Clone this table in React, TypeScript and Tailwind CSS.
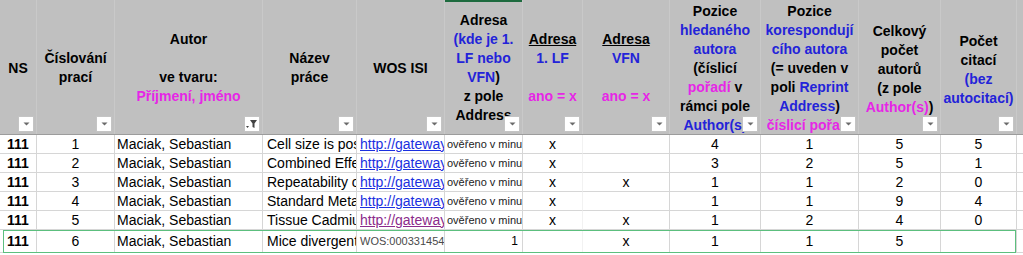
import React from "react";

const COLS =
  "grid grid-cols-[37px_78px_148px_94px_88px_78px_60px_87px_91px_98px_82px_76px_1fr]";

const B = "text-[#2323d9]";
const M = "text-[#e626e6]";

function FilterBtn({ active }: { active?: boolean }) {
  return (
    <div className="absolute right-[2px] bottom-[2px] w-[16px] h-[16px] bg-white border border-[#c4c4c4] flex items-center justify-center">
      {active ? (
        <svg width="12" height="10" viewBox="0 0 12 10">
          <polygon points="4,1 11,1 8.5,4.5 8.5,9 6.5,8 6.5,4.5" fill="#444" />
          <polygon points="0,7 3,7 1.5,9" fill="#444" />
        </svg>
      ) : (
        <svg width="7" height="4" viewBox="0 0 7 4">
          <polygon points="0.5,0.5 6.5,0.5 3.5,3.5" fill="#6b6b6b" />
        </svg>
      )}
    </div>
  );
}

function H({
  children,
  active,
  top,
  last,
}: {
  children?: React.ReactNode;
  active?: boolean;
  top?: boolean;
  last?: boolean;
}) {
  return (
    <div
      className={
        "relative h-[134px] flex items-center justify-center text-center overflow-hidden " +
        (last ? "" : "border-r border-[#c9c9c9]")
      }
    >
      {top && <div className="absolute top-0 left-0 right-0 h-[2px] bg-[#1e6b3f]" />}
      <div className="whitespace-nowrap pt-[2px]">{children}</div>
      {!last && <FilterBtn active={active} />}
    </div>
  );
}

function L({ children }: { children?: React.ReactNode }) {
  return <div className="h-[19px]">{children ?? "\u00a0"}</div>;
}

type Row = {
  t: string;
  link: string;
  linkVisited?: boolean;
  wos?: boolean;
  adr: string;
  lf: string;
  vfn: string;
  a: string;
  b: string;
  c: string;
  d: string;
  n: string;
};

const rows: Row[] = [
  { n: "1", t: "Cell size is posit", link: "http://gateway.is", adr: "ověřeno v minu", lf: "x", vfn: "", a: "4", b: "1", c: "5", d: "5" },
  { n: "2", t: "Combined Effect", link: "http://gateway.is", adr: "ověřeno v minu", lf: "x", vfn: "", a: "3", b: "2", c: "5", d: "1" },
  { n: "3", t: "Repeatability of", link: "http://gateway.is", adr: "ověřeno v minu", lf: "x", vfn: "x", a: "1", b: "1", c: "2", d: "0" },
  { n: "4", t: "Standard Metab", link: "http://gateway.is", adr: "ověřeno v minu", lf: "x", vfn: "", a: "1", b: "1", c: "9", d: "4" },
  { n: "5", t: "Tissue Cadmium", link: "http://gateway.is", linkVisited: true, adr: "ověřeno v minu", lf: "x", vfn: "x", a: "1", b: "2", c: "4", d: "0" },
];

const cell = "border-r border-b border-[#d6d6d6] overflow-hidden whitespace-nowrap flex items-center";

function DataRow({ r, h }: { r: Row; h: string }) {
  return (
    <div className={COLS + " " + h + " text-[14px] text-black"}>
      <div className={cell + " justify-center font-bold"}>111</div>
      <div className={cell + " justify-center"}>{r.n}</div>
      <div className={cell + " pl-[2px]"}>Maciak, Sebastian</div>
      <div className={cell + " pl-[4px]"}>{r.t}</div>
      {r.wos ? (
        <div className={cell + " pl-[3px] text-[11px] text-[#4a4a4a]"}>{r.link}</div>
      ) : (
        <div
          className={
            cell +
            " pl-[3px] underline " +
            (r.linkVisited ? "text-[#8b2a8b]" : "text-[#1a2fe0]")
          }
        >
          {r.link}
        </div>
      )}
      {r.wos ? (
        <div className={cell + " justify-end pr-[4px] text-[12px]"}>{r.adr}</div>
      ) : (
        <div className={cell + " pl-[2px] text-[11px] text-[#222]"}>{r.adr}</div>
      )}
      <div className={cell + " justify-center border-r-[#f2f2f2]"}>{r.lf}</div>
      <div className={cell + " justify-center"}>{r.vfn}</div>
      <div className={cell + " justify-center"}>{r.a}</div>
      <div className={cell + " justify-center"}>{r.b}</div>
      <div className={cell + " justify-center"}>{r.c}</div>
      <div className={cell + " justify-center"}>{r.d}</div>
      <div className="border-b border-[#d6d6d6]" />
    </div>
  );
}

export default function App() {
  return (
    <div
      className="w-[1023px] h-[255px] overflow-hidden bg-white"
      style={{ fontFamily: '"Liberation Sans", Arial, sans-serif' }}
    >
      <div
        className={
          COLS +
          " bg-[#c0c0c0] border-b border-[#9c9c9c] text-[14px] leading-[19px] font-bold text-black"
        }
      >
        <H>
          <L>NS</L>
        </H>
        <H>
          <L>Číslování</L>
          <L>prací</L>
        </H>
        <H active>
          <L>Autor</L>
          <L />
          <L>ve tvaru:</L>
          <L>
            <span className={M}>Příjmení, jméno</span>
          </L>
        </H>
        <H>
          <L>Název</L>
          <L>práce</L>
        </H>
        <H>
          <L>WOS ISI</L>
        </H>
        <H top>
          <L>Adresa</L>
          <L>
            <span className={B}>(</span>
            <span className={B}>kde je 1.</span>
          </L>
          <L>
            <span className={B}>LF nebo</span>
          </L>
          <L>
            <span className={B}>VFN</span>)
          </L>
          <L>z pole</L>
          <L>Address</L>
        </H>
        <H>
          <L>
            <span className="underline">Adresa</span>
          </L>
          <L>
            <span className={B}>1. LF</span>
          </L>
          <L />
          <L>
            <span className={M}>ano = x</span>
          </L>
        </H>
        <H>
          <L>
            <span className="underline">Adresa</span>
          </L>
          <L>
            <span className={B}>VFN</span>
          </L>
          <L />
          <L>
            <span className={M}>ano = x</span>
          </L>
        </H>
        <H>
          <L>Pozice</L>
          <L>
            <span className={B}>hledaného</span>
          </L>
          <L>
            <span className={B}>autora</span>
          </L>
          <L>(číslicí</L>
          <L>
            <span className={M}>pořadí</span> v
          </L>
          <L>rámci pole</L>
          <L>
            <span className={B}>Author(s)</span>
          </L>
        </H>
        <H>
          <L>Pozice</L>
          <L>
            <span className={B}>korespondují</span>
          </L>
          <L>
            <span className={B}>cího autora</span>
          </L>
          <L>(= uveden v</L>
          <L>
            poli <span className={B}>Reprint</span>
          </L>
          <L>
            <span className={B}>Address</span>)
          </L>
          <L>
            <span className={M}>číslicí pořadí</span>
          </L>
        </H>
        <H>
          <div className="pt-[3px]">
            <L>Celkový</L>
            <L>počet</L>
            <L>autorů</L>
            <L>(z pole</L>
            <L>
              <span className={M}>Author(s)</span>)
            </L>
          </div>
        </H>
        <H>
          <div className="pt-[3px]">
            <L>Počet</L>
            <L>citací</L>
            <L>
              <span className={B}>(bez</span>
            </L>
            <L>
              <span className={B}>autocitací)</span>
            </L>
          </div>
        </H>
        <H last />
      </div>

      {rows.map((r, i) => (
        <DataRow key={i} r={r} h="h-[19px]" />
      ))}

      <div className="relative">
        <DataRow
          h="h-[23px]"
          r={{
            n: "6",
            t: "Mice divergent",
            link: "WOS:000331454",
            wos: true,
            adr: "1",
            lf: "",
            vfn: "x",
            a: "1",
            b: "1",
            c: "5",
            d: "",
          }}
        />
        <div className="absolute left-[3px] top-0 w-[1013px] h-[23px] border border-[#5cbf7e] pointer-events-none" />
      </div>
    </div>
  );
}
